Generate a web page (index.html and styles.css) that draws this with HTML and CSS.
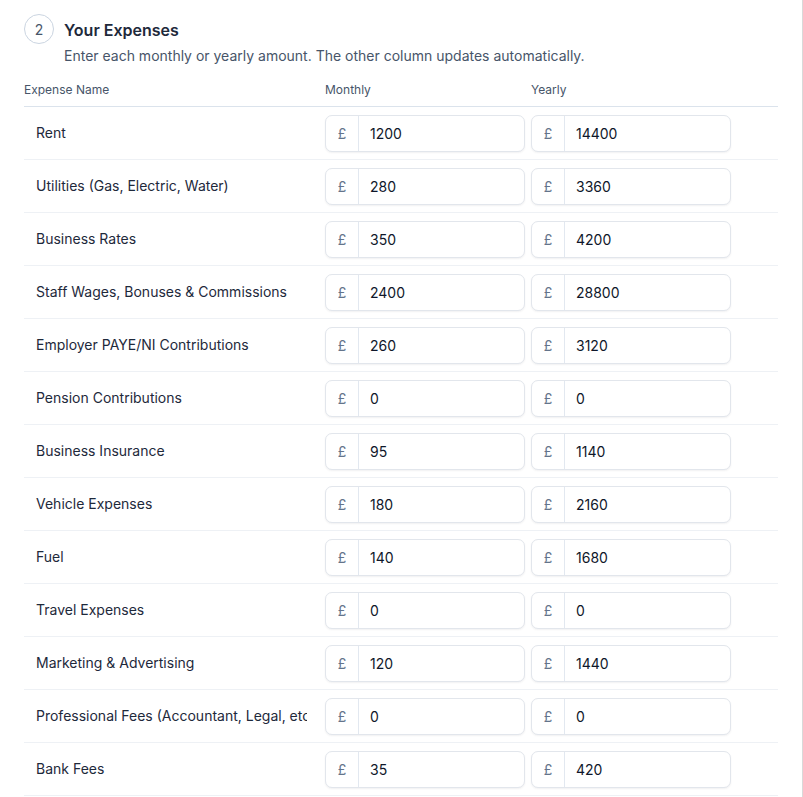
FILE: index.html
```html
<!DOCTYPE html>
<html lang="en">
<head>
<meta charset="utf-8">
<title>Your Expenses</title>
<link rel="stylesheet" href="styles.css">
</head>
<body>
<div class="page">
  <section class="step">
    <header class="step-head">
      <span class="step-num">2</span>
      <div class="step-text">
        <h2 class="step-title">Your Expenses</h2>
        <p class="step-sub">Enter each monthly or yearly amount. The other column updates automatically.</p>
      </div>
    </header>

    <div class="grid">
      <div class="row row-head">
        <div class="cell head-name">Expense Name</div>
        <div class="cell amt">Monthly</div>
        <div class="cell amt">Yearly</div>
        <div class="cell"></div>
      </div>

      <div class="row">
        <div class="cell name">Rent</div>
        <div class="cell amt"><label class="money"><span class="cur">£</span><input value="1200"></label></div>
        <div class="cell amt"><label class="money"><span class="cur">£</span><input value="14400"></label></div>
        <div class="cell"></div>
      </div>
      <div class="row">
        <div class="cell name">Utilities (Gas, Electric, Water)</div>
        <div class="cell amt"><label class="money"><span class="cur">£</span><input value="280"></label></div>
        <div class="cell amt"><label class="money"><span class="cur">£</span><input value="3360"></label></div>
        <div class="cell"></div>
      </div>
      <div class="row">
        <div class="cell name">Business Rates</div>
        <div class="cell amt"><label class="money"><span class="cur">£</span><input value="350"></label></div>
        <div class="cell amt"><label class="money"><span class="cur">£</span><input value="4200"></label></div>
        <div class="cell"></div>
      </div>
      <div class="row">
        <div class="cell name">Staff Wages, Bonuses &amp; Commissions</div>
        <div class="cell amt"><label class="money"><span class="cur">£</span><input value="2400"></label></div>
        <div class="cell amt"><label class="money"><span class="cur">£</span><input value="28800"></label></div>
        <div class="cell"></div>
      </div>
      <div class="row">
        <div class="cell name">Employer PAYE/NI Contributions</div>
        <div class="cell amt"><label class="money"><span class="cur">£</span><input value="260"></label></div>
        <div class="cell amt"><label class="money"><span class="cur">£</span><input value="3120"></label></div>
        <div class="cell"></div>
      </div>
      <div class="row">
        <div class="cell name">Pension Contributions</div>
        <div class="cell amt"><label class="money"><span class="cur">£</span><input value="0"></label></div>
        <div class="cell amt"><label class="money"><span class="cur">£</span><input value="0"></label></div>
        <div class="cell"></div>
      </div>
      <div class="row">
        <div class="cell name">Business Insurance</div>
        <div class="cell amt"><label class="money"><span class="cur">£</span><input value="95"></label></div>
        <div class="cell amt"><label class="money"><span class="cur">£</span><input value="1140"></label></div>
        <div class="cell"></div>
      </div>
      <div class="row">
        <div class="cell name">Vehicle Expenses</div>
        <div class="cell amt"><label class="money"><span class="cur">£</span><input value="180"></label></div>
        <div class="cell amt"><label class="money"><span class="cur">£</span><input value="2160"></label></div>
        <div class="cell"></div>
      </div>
      <div class="row">
        <div class="cell name">Fuel</div>
        <div class="cell amt"><label class="money"><span class="cur">£</span><input value="140"></label></div>
        <div class="cell amt"><label class="money"><span class="cur">£</span><input value="1680"></label></div>
        <div class="cell"></div>
      </div>
      <div class="row">
        <div class="cell name">Travel Expenses</div>
        <div class="cell amt"><label class="money"><span class="cur">£</span><input value="0"></label></div>
        <div class="cell amt"><label class="money"><span class="cur">£</span><input value="0"></label></div>
        <div class="cell"></div>
      </div>
      <div class="row">
        <div class="cell name">Marketing &amp; Advertising</div>
        <div class="cell amt"><label class="money"><span class="cur">£</span><input value="120"></label></div>
        <div class="cell amt"><label class="money"><span class="cur">£</span><input value="1440"></label></div>
        <div class="cell"></div>
      </div>
      <div class="row">
        <div class="cell name">Professional Fees (Accountant, Legal, etc.)</div>
        <div class="cell amt"><label class="money"><span class="cur">£</span><input value="0"></label></div>
        <div class="cell amt"><label class="money"><span class="cur">£</span><input value="0"></label></div>
        <div class="cell"></div>
      </div>
      <div class="row">
        <div class="cell name">Bank Fees</div>
        <div class="cell amt"><label class="money"><span class="cur">£</span><input value="35"></label></div>
        <div class="cell amt"><label class="money"><span class="cur">£</span><input value="420"></label></div>
        <div class="cell"></div>
      </div>
    </div>
  </section>
</div>
</body>
</html>
```

FILE: styles.css
```css
* {
  box-sizing: border-box;
}

html, body {
  margin: 0;
  padding: 0;
  background: #ffffff;
  height: 100%;
  overflow: hidden;
}

body {
  font-family: Inter, "Noto Sans", "Liberation Sans", sans-serif;
  color: #1e293b;
}

.page {
  border-right: 1px solid #d9d9d9;
  min-height: 100%;
  padding: 14px 24px 0 24px;
}

/* step heading */
.step-head {
  display: flex;
  align-items: flex-start;
  gap: 10px;
}

.step-num {
  flex: 0 0 30px;
  width: 30px;
  height: 30px;
  border: 1px solid #cbd5e1;
  border-radius: 50%;
  display: flex;
  align-items: center;
  justify-content: center;
  font-size: 14px;
  color: #475569;
}

.step-text {
  padding-top: 4px;
}

.step-title {
  margin: 0;
  font-size: 16px;
  line-height: 24px;
  font-weight: 600;
  color: #1e293b;
}

.step-sub {
  margin: 4px 0 0 0;
  font-size: 14px;
  line-height: 20px;
  color: #475569;
}

/* expense grid */
.grid {
  margin-top: 6px;
}

.row {
  display: grid;
  grid-template-columns: 289px 206px 206px 1fr;
  align-items: center;
  border-bottom: 1px solid #eef1f5;
  height: 53px;
}

.row-head {
  height: 35px;
  align-items: end;
  padding-bottom: 8px;
  border-bottom-color: #dbe3ec;
}

.row-head .cell {
  font-size: 12px;
  line-height: 16px;
  color: #475569;
  font-weight: 400;
}

.cell {
  min-width: 0;
}

.head-name {
  padding-left: 0;
}

.name {
  margin-right: 6px;
  padding-left: 12px;
  font-size: 14px;
  line-height: 20px;
  color: #1e293b;
  white-space: nowrap;
  overflow: hidden;
}

.amt {
  padding-left: 12px;
}

.money {
  display: flex;
  width: 200px;
  height: 37px;
  border: 1px solid #e2e6ec;
  border-radius: 7px;
  box-shadow: 0 1px 2px rgba(15, 23, 42, 0.06);
  background: #fff;
  overflow: hidden;
}

.cur {
  flex: 0 0 33px;
  display: flex;
  align-items: center;
  justify-content: center;
  border-right: 1px solid #e2e8f0;
  font-size: 14px;
  color: #64748b;
}

.money input {
  flex: 1;
  min-width: 0;
  border: 0;
  outline: none;
  padding: 0 0 0 11px;
  font: inherit;
  font-size: 14px;
  color: #0f172a;
  background: transparent;
}
```
